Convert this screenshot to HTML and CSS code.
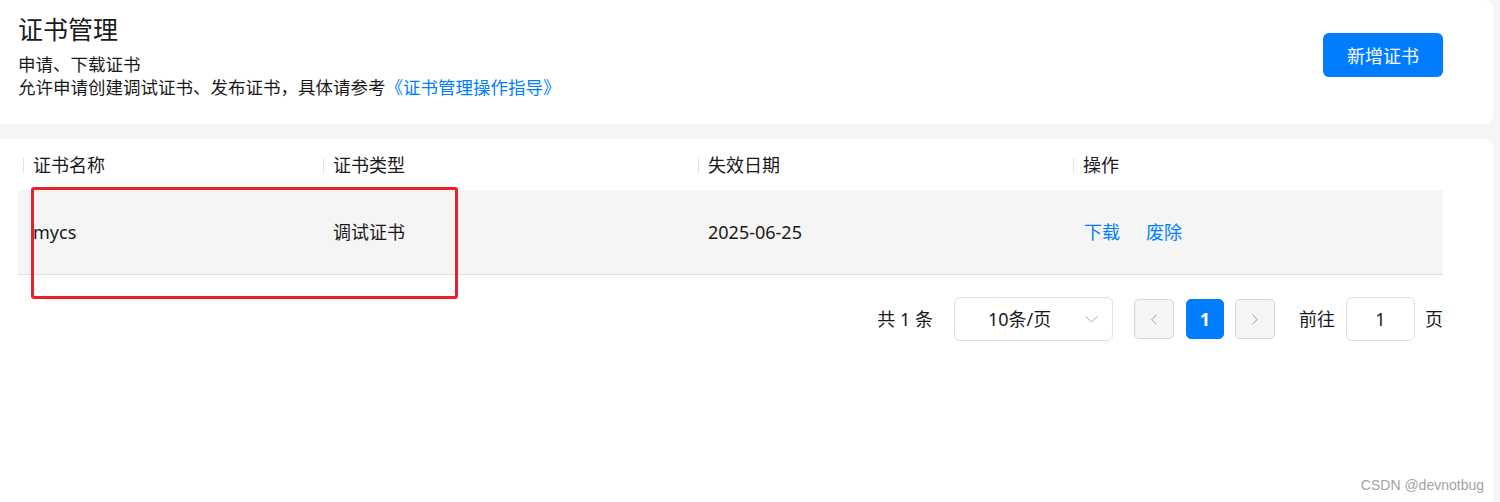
FILE: index.html
```html
<!DOCTYPE html>
<html lang="zh-CN">
<head>
  <meta charset="UTF-8">
  <title>证书管理</title>
  <link rel="stylesheet" href="styles.css">
</head>
<body>
  <div class="page">
    <!-- 页头 -->
    <header class="intro-card">
      <div class="intro-text">
        <h1>证书管理</h1>
        <p>申请、下载证书</p>
        <p>允许申请创建调试证书、发布证书，具体请参考<a href="#">《证书管理操作指导》</a></p>
      </div>
      <button class="btn-primary">新增证书</button>
    </header>

    <!-- 证书列表 -->
    <section class="list-card">
      <div class="cert-table">
        <div class="row head-row">
          <div class="cell"><span class="th">证书名称</span></div>
          <div class="cell"><span class="th">证书类型</span></div>
          <div class="cell"><span class="th">失效日期</span></div>
          <div class="cell"><span class="th">操作</span></div>
        </div>
        <div class="row data-row">
          <div class="cell">mycs</div>
          <div class="cell">调试证书</div>
          <div class="cell">2025-06-25</div>
          <div class="cell actions">
            <a href="#">下载</a>
            <a href="#">废除</a>
          </div>
        </div>
      </div>

      <div class="pager">
        <span class="total">共 1 条</span>
        <div class="size-select">
          <span>10条/页</span>
          <svg class="caret" width="13" height="7" viewBox="0 0 13 7"><path d="M0.5 0.5 L6.5 6 L12.5 0.5" fill="none" stroke="#a8a8a8" stroke-width="1"/></svg>
        </div>
        <div class="pages">
          <button class="page-btn">
            <svg width="6" height="11" viewBox="0 0 6 11"><path d="M5.5 0.5 L0.8 5.5 L5.5 10.5" fill="none" stroke="#a0a0a0" stroke-width="1"/></svg>
          </button>
          <button class="page-btn current">1</button>
          <button class="page-btn">
            <svg width="6" height="11" viewBox="0 0 6 11"><path d="M0.5 0.5 L5.2 5.5 L0.5 10.5" fill="none" stroke="#a0a0a0" stroke-width="1"/></svg>
          </button>
        </div>
        <span class="jump">前往</span>
        <div class="jump-input">1</div>
        <span class="jump-end">页</span>
      </div>

      <!-- 截图上的红色标注框 -->
      <div class="mark-box"></div>
    </section>

    <div class="watermark">CSDN @devnotbug</div>
  </div>
</body>
</html>
```

FILE: styles.css
```css
body {
  margin: 0;
  background-color: #f5f5f5;
  font-family: "Noto Sans", "Noto Sans CJK SC", sans-serif;
  color: #191919;
}

.page {
  width: 1493px;
  height: 100vh;
  display: flex;
  flex-direction: column;
  position: relative;
  overflow: hidden;
}

/* 页头卡片 */
.intro-card {
  display: flex;
  justify-content: space-between;
  align-items: flex-start;
  height: 124px;
  box-sizing: border-box;
  padding: 13px 50px 0 18px;
  background-color: #fff;
  border-radius: 0 8px 8px 0;
}

.intro-text h1 {
  margin: 0;
  font-size: 25px;
  line-height: 33px;
  font-weight: normal;
}

.intro-text h1 + p {
  margin-top: 7px;
}

.intro-text p {
  margin: 0;
  font-size: 17.5px;
  line-height: 23px;
}

.intro-text a {
  color: #007dff;
  text-decoration: none;
}

.btn-primary {
  margin-top: 20px;
  width: 120px;
  height: 44px;
  border: none;
  border-radius: 6px;
  background-color: #007dff;
  color: #fff;
  font-family: inherit;
  font-size: 18px;
  cursor: pointer;
}

/* 列表卡片 */
.list-card {
  flex: 1;
  margin-top: 15px;
  padding: 0 50px 0 18px;
  background-color: #fff;
  border-radius: 0 8px 0 0;
  position: relative;
}

.row {
  display: grid;
  grid-template-columns: 300px 375px 375px 375px;
  align-items: center;
  font-size: 18px;
  line-height: 24px;
}

.head-row {
  height: 51px;
}

.head-row .cell {
  padding-left: 5px;
}

.th::before {
  content: "";
  display: inline-block;
  width: 1px;
  height: 15px;
  margin-right: 9px;
  vertical-align: -1px;
  background-color: #e3e3e3;
}

.data-row {
  height: 84px;
  background-color: #f5f5f5;
  border-bottom: 1px solid #e0e0e0;
}

.data-row .cell {
  padding-left: 15px;
}

.actions {
  display: flex;
  gap: 25px;
}

.actions a {
  color: #007dff;
  text-decoration: none;
  padding-left: 1px;
}

/* 分页 */
.pager {
  display: flex;
  justify-content: flex-end;
  align-items: center;
  margin-top: 22px;
  font-size: 18px;
  line-height: 24px;
}

.size-select {
  display: flex;
  align-items: center;
  box-sizing: border-box;
  width: 159px;
  height: 44px;
  margin-left: 21px;
  padding: 0 14px 0 33px;
  border: 1px solid #dcdfe6;
  border-radius: 6px;
}

.caret {
  margin-left: auto;
}

.pages {
  display: flex;
  gap: 11px;
  margin-left: 21px;
}

.page-btn {
  display: flex;
  align-items: center;
  justify-content: center;
  box-sizing: border-box;
  width: 40px;
  height: 40px;
  padding: 0;
  border: 1px solid #d6d6d6;
  border-radius: 5px;
  background-color: #f5f5f5;
  font-family: inherit;
}

.page-btn.current {
  width: 38px;
  margin-left: 1px;
  border-color: #007dff;
  background-color: #007dff;
  color: #fff;
  font-size: 18px;
  font-weight: bold;
}

.jump {
  margin-left: 24px;
}

.jump-input {
  box-sizing: border-box;
  width: 69px;
  height: 44px;
  margin-left: 11px;
  border: 1px solid #dcdfe6;
  border-radius: 6px;
  text-align: center;
  line-height: 42px;
}

.jump-end {
  margin-left: 10px;
}

/* 标注框 */
.mark-box {
  position: absolute;
  left: 31px;
  top: 48px;
  width: 427px;
  height: 112px;
  box-sizing: border-box;
  border: 3px solid #e8202a;
  border-radius: 3px;
}

.watermark {
  position: absolute;
  right: 9px;
  bottom: 9px;
  font-family: "Liberation Sans", Arial, sans-serif;
  font-size: 14px;
  color: #a3a3a3;
}
```
